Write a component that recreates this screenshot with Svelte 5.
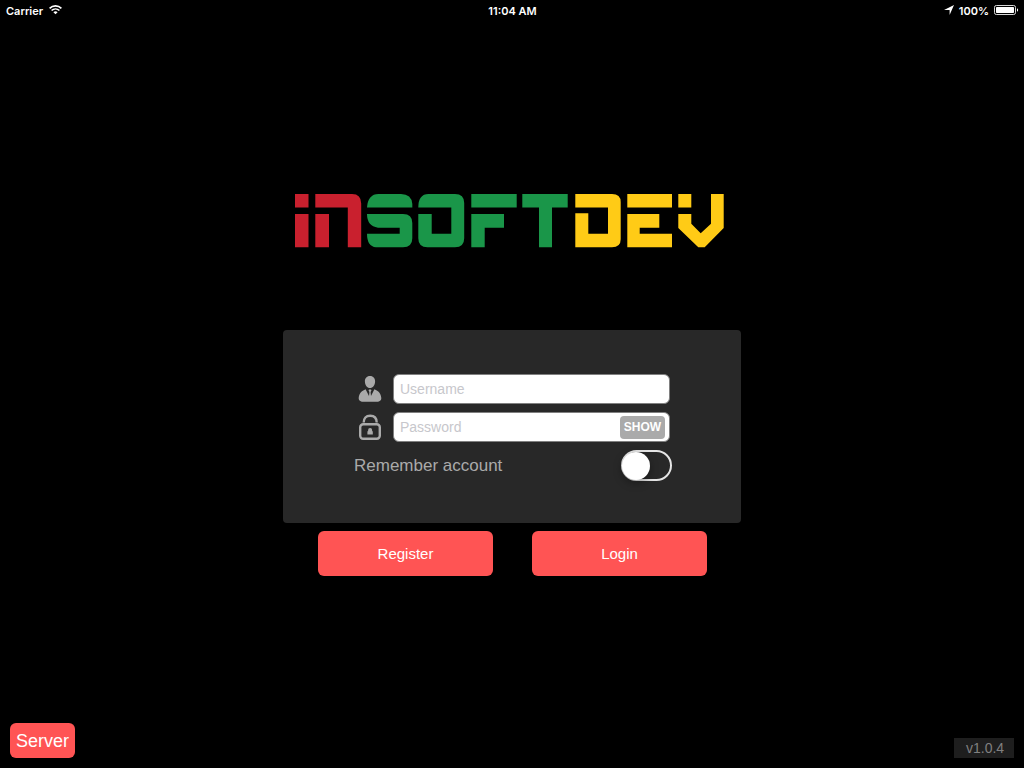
<script>
  let username = $state('');
  let password = $state('');
  let visible = $state(false);
  let remember = $state(false);
</script>

<div class="screen">
  <header class="status">
    <div class="side">
      <span>Carrier</span>
      <svg width="13" height="10" viewBox="0 0 13 10" fill="none" stroke="#fff" aria-hidden="true">
        <path d="M0.6 3.300a8.600 8.600 0 0 1 11.800 0" stroke-width="1.700" />
        <path d="M2.600 5.500a5.700 5.700 0 0 1 7.800 0" stroke-width="1.600" />
        <path d="M6.500 9.300 4.400 7.200a3 3 0 0 1 4.200 0z" fill="#fff" stroke="none" />
      </svg>
    </div>
    <span class="time">11:04 AM</span>
    <div class="side end">
      <svg width="10" height="10" viewBox="0 0 10 10" aria-hidden="true">
        <path d="M10 0 5.600 10V5H0z" fill="#fff" />
      </svg>
      <span>100%</span>
      <svg class="battery" width="25" height="10" viewBox="0 0 25 10" aria-hidden="true">
        <rect x="0.5" y="0.5" width="21" height="9" rx="1.800" fill="none" stroke="#d8d8d8" />
        <rect x="2" y="2" width="18" height="6" rx="0.800" fill="#fff" />
        <path d="M23 3.200a2 2 0 0 1 0 3.600z" fill="#fff" />
      </svg>
    </div>
  </header>

  <main>
    <svg class="logo" width="436" height="56" viewBox="0 0 436 56" role="img" aria-label="inSoftDev">
      <g fill="#c9202e">
        <path d="M1 1h13.500v13.500H1zM1 21h13.500v33.300H1z" />
        <path d="M21.300 1H58q9.200 0 9.200 9.500v43.800H53.800V14.500H21.300zM21.300 21H35v33.300H21.300z" />
      </g>
      <g fill="#1a9649">
        <path d="M73 14.500Q74 1 84.500 1H107q10.500 0 11.300 10v3.500z" />
        <path d="M73 21h36q9.300 0 9.300 9v15.300q0 9-9.300 9H82q-9-1-9-13.600h32.700v-6H84Q73 33 73 21z" />
        <path d="M124.300 14.500Q124.300 1 134.500 1H161q9.200 0 9.200 9v35.300q0 9-9.200 9h-27.500q-9.200 0-9.200-9V21h13.400v19.700h19.600V14.500z" />
        <path d="M177.300 1h45.400v13.500h-45.400zM177.300 21H210v13.700h-19.300v19.600h-13.400z" />
        <path d="M228.300 1h45.400v13.500H258v39.800h-13V14.500h-16.700z" />
      </g>
      <g fill="#ffcb16">
        <path d="M281.300 1H318q8.700 0 8.700 8v37.300q0 8-8.700 8h-36.700v-34h13v20.400H314V14.500h-32.700z" />
        <path d="M333.300 1H378v13.500h-44.700zM333.300 21h32v13.700h-19.600v6H378v13.600h-44.700z" />
        <path d="M384.300 1h13v13.500h-13zM384.300 21h13v9.700l9.400 9.500 10.300-9.500V1h12.700v34l-19 19.300h-6.400l-20-19.300z" />
      </g>
    </svg>

    <form onsubmit={(e) => e.preventDefault()}>
      <div class="card">
        <div class="field">
          <label for="username" aria-label="Username">
            <svg width="24" height="28" viewBox="0 0 24 28" aria-hidden="true">
              <path d="M12 1c3.400 0 5.300 2.500 5.100 5.700C16.900 10 14.900 13 12 13S7.100 10 6.900 6.700C6.700 3.500 8.600 1 12 1z" fill="#aaa" />
              <path d="M7.600 14.200 11 21l.4-4-.9-1.800.6-.8h1.800l.6.800-.9 1.800.4 4 3.400-6.800c4.100 1.600 6.600 4.400 6.900 8.700.2 3.100-2.700 3.900-5.300 3.900H6c-2.600 0-5.500-.8-5.300-3.900.3-4.300 2.800-7.100 6.900-8.700z" fill="#aaa" />
            </svg>
          </label>
          <input id="username" type="text" placeholder="Username" bind:value={username} />
        </div>
        <div class="field">
          <label for="password" aria-label="Password">
            <svg width="24" height="28" viewBox="0 0 24 28" fill="none" stroke="#aaa" aria-hidden="true">
              <rect x="2.200" y="11.200" width="19.600" height="14.600" rx="3" stroke-width="2.400" />
              <path d="M5.700 9.600C5.700 5 8 2.800 12.200 2.800s6.500 2.200 6.500 6.800" stroke-width="2.400" />
              <path d="M9.400 21.500v-3.200h.7v-1.200a2 2 0 0 1 4 0v1.200h.7v3.200z" fill="#aaa" stroke="none" />
            </svg>
          </label>
          <div class="secret">
            <input id="password" type={visible ? 'text' : 'password'} placeholder="Password" bind:value={password} />
            <button class="show" type="button" onclick={() => (visible = !visible)}>SHOW</button>
          </div>
        </div>
        <label class="remember">
          <span>Remember account</span>
          <input type="checkbox" role="switch" bind:checked={remember} />
        </label>
      </div>
      <div class="actions">
        <button type="button">Register</button>
        <button type="submit">Login</button>
      </div>
    </form>
  </main>

  <footer>
    <button class="server" type="button">Server</button>
    <span class="version">v1.0.4</span>
  </footer>
</div>

<style>
  :global(body) {
    margin: 0;
    background: #000;
  }
  .screen {
    box-sizing: border-box;
    min-height: 100vh;
    display: flex;
    flex-direction: column;
    background: #000;
    color: #fff;
    font-family: "Liberation Sans", Arial, sans-serif;
  }
  button,
  input {
    box-sizing: border-box;
    margin: 0;
    border: 0;
    font-family: inherit;
  }
  button {
    padding: 0;
    color: #fff;
    background: #ff5454;
    border-radius: 6px;
    cursor: pointer;
  }
  .status {
    display: grid;
    grid-template-columns: 1fr auto 1fr;
    align-items: center;
    padding: 1px 5px 0 6px;
    font: 600 11px/20px Inter, "Liberation Sans", sans-serif;
  }
  .side {
    display: flex;
    align-items: center;
    gap: 6px;
  }
  .end {
    justify-content: flex-end;
    gap: 5px;
  }
  .side svg {
    margin-bottom: 2px;
  }
  main {
    flex: 1;
    display: flex;
    flex-direction: column;
    align-items: center;
    padding: 172px 16px 32px;
  }
  .logo {
    max-width: 100%;
    margin-bottom: 81px;
  }
  form {
    width: 100%;
    max-width: 458px;
  }
  .card {
    display: flex;
    flex-direction: column;
    gap: 8px;
    padding: 44px 69px 42px 71px;
    border-radius: 4px;
    background: #282828;
  }
  .field {
    display: flex;
    align-items: center;
    gap: 11px;
    padding: 0 2px 0 4px;
  }
  .field svg {
    display: block;
  }
  .field input {
    flex: 1;
    min-width: 0;
    width: 100%;
    height: 30px;
    padding: 0 6px 1px;
    border: 1px solid #808080;
    border-radius: 6px;
    background: #fff;
    color: #222;
    font-size: 14px;
  }
  .field input::placeholder {
    color: #c7c7cc;
    opacity: 1;
  }
  .secret {
    position: relative;
    flex: 1;
    display: flex;
  }
  .field .secret input {
    padding-right: 54px;
  }
  .show {
    position: absolute;
    top: 4px;
    right: 5px;
    width: 45px;
    height: 23px;
    border-radius: 4px;
    background: #aaa;
    font: 700 12px/23px "Liberation Sans", Arial, sans-serif;
  }
  .remember {
    display: flex;
    align-items: center;
    justify-content: space-between;
    color: #aaa;
    font-size: 17px;
    line-height: 31px;
  }
  .remember input {
    appearance: none;
    width: 51px;
    height: 31px;
    padding: 0;
    border: 2px solid #e5e5e5;
    border-radius: 16px;
    display: flex;
    align-items: center;
    cursor: pointer;
  }
  .remember input::before {
    content: "";
    width: 28px;
    height: 28px;
    margin: 0 -1px;
    border-radius: 14px;
    background: #fff;
    box-shadow: 0 3px 8px rgba(0, 0, 0, 0.35);
  }
  .remember input:checked {
    justify-content: flex-end;
    background: #ff5454;
  }
  .actions {
    display: flex;
    gap: 39px;
    padding: 8px 34px 0 35px;
  }
  .actions button {
    flex: 1;
    height: 45px;
    font-size: 15px;
  }
  footer {
    display: flex;
    align-items: flex-end;
    justify-content: space-between;
    padding: 10px;
  }
  .server {
    width: 65px;
    height: 35px;
    padding-top: 1px;
    font-size: 18px;
  }
  .version {
    width: 60px;
    padding-left: 12px;
    box-sizing: border-box;
    background: #1e1e1e;
    color: #808080;
    font-size: 14px;
    line-height: 20px;
  }
</style>
